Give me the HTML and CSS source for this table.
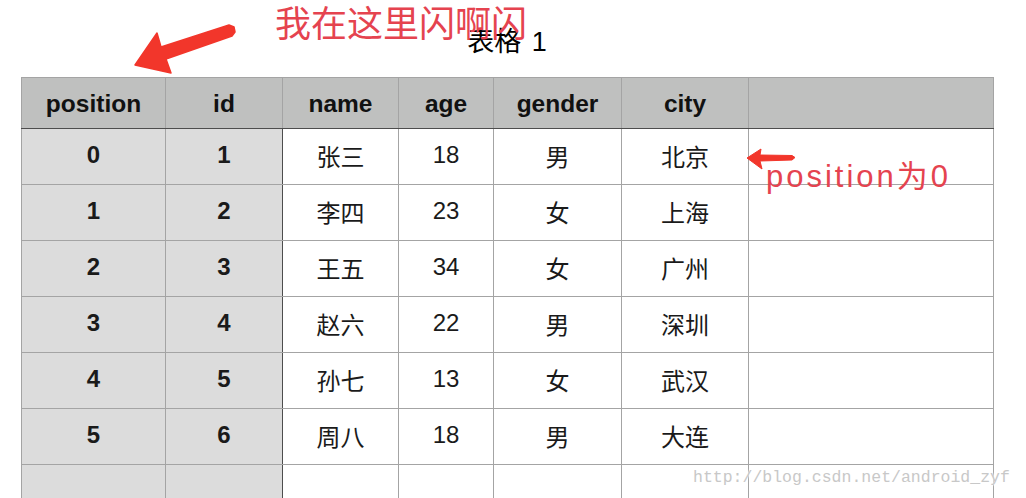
FILE: index.html
```html
<!DOCTYPE html>
<html lang="zh">
<head>
<meta charset="utf-8">
<title>表格 1</title>
<link rel="stylesheet" href="styles.css">
</head>
<body>
<div class="page">
  <div class="caption-area">
    <div class="caption">表格 1</div>
  </div>
  <table class="sheet">
    <colgroup>
      <col class="c-pos"><col class="c-id"><col class="c-name"><col class="c-age"><col class="c-gender"><col class="c-city"><col class="c-extra">
    </colgroup>
    <thead>
      <tr><th>position</th><th>id</th><th>name</th><th>age</th><th>gender</th><th>city</th><th></th></tr>
    </thead>
    <tbody>
      <tr><td class="key">0</td><td class="key key-last">1</td><td>张三</td><td>18</td><td>男</td><td>北京</td><td></td></tr>
      <tr><td class="key">1</td><td class="key key-last">2</td><td>李四</td><td>23</td><td>女</td><td>上海</td><td></td></tr>
      <tr><td class="key">2</td><td class="key key-last">3</td><td>王五</td><td>34</td><td>女</td><td>广州</td><td></td></tr>
      <tr><td class="key">3</td><td class="key key-last">4</td><td>赵六</td><td>22</td><td>男</td><td>深圳</td><td></td></tr>
      <tr><td class="key">4</td><td class="key key-last">5</td><td>孙七</td><td>13</td><td>女</td><td>武汉</td><td></td></tr>
      <tr><td class="key">5</td><td class="key key-last">6</td><td>周八</td><td>18</td><td>男</td><td>大连</td><td></td></tr>
      <tr><td class="key"></td><td class="key key-last"></td><td></td><td></td><td></td><td></td><td></td></tr>
    </tbody>
  </table>

  <div class="note note-top">我在这里闪啊闪</div>
  <svg class="arrow arrow-big" width="260" height="80" viewBox="0 0 260 80" aria-hidden="true">
    <polygon points="135,65 157,33 161,47 229,25 234,27 235,32 232,36 166,59 171,73" fill="#f2362b" stroke="#f2362b" stroke-width="1.5" stroke-linejoin="round"/>
  </svg>
  <div class="note note-side">position为0</div>
  <svg class="arrow arrow-small" width="1026" height="200" viewBox="0 0 1026 200" aria-hidden="true">
    <polygon points="747,158 761,149 760,155 792,155.5 795,157.5 792,160 760,161 762,169" fill="#f2362b" stroke="#f2362b" stroke-width="1" stroke-linejoin="round"/>
  </svg>
  <div class="watermark">http://blog.csdn.net/android_zyf</div>
</div>
</body>
</html>
```

FILE: styles.css
```css
html, body {
  margin: 0;
  padding: 0;
  background: #ffffff;
  overflow: hidden;
}

.page {
  position: relative;
  width: 1026px;
  height: 498px;
  overflow: hidden;
  padding-left: 21px;
  box-sizing: border-box;
  font-family: "Liberation Sans", "Noto Sans CJK SC", sans-serif;
  color: #111;
}

.caption-area {
  width: 972px;
  height: 77px;
  display: flex;
  justify-content: center;
  align-items: flex-start;
  box-sizing: border-box;
  padding-top: 26px;
}

.caption {
  font-size: 27px;
  line-height: 32px;
  color: #000;
  word-spacing: 3px;
}

.sheet {
  border-collapse: collapse;
  table-layout: fixed;
  width: 973px;
  font-size: 24px;
}

.c-pos { width: 144px; }
.c-id { width: 117px; }
.c-name { width: 116px; }
.c-age { width: 95px; }
.c-gender { width: 128px; }
.c-city { width: 127px; }
.c-extra { width: 245px; }

.sheet th,
.sheet td {
  border: 1px solid #a4a4a4;
  padding: 0;
  text-align: center;
  vertical-align: middle;
}

.sheet thead th {
  height: 49px;
  padding-top: 1px;
  background: #bfc0bf;
  font-weight: bold;
  font-size: 24.5px;
  color: #111;
  border-bottom: 1px solid #4d4d4d;
}

.sheet tbody td {
  height: 52px;
  padding-bottom: 3px;
  color: #1a1a1a;
}

.sheet tbody td.key {
  background: #dcdcdc;
  font-weight: bold;
}

.sheet tbody td.key-last {
  border-right: 1px solid #4d4d4d;
}

.note {
  position: absolute;
  color: #e5434f;
  font-family: "Liberation Sans", "Noto Sans CJK SC", sans-serif;
  white-space: nowrap;
}

.note-top {
  left: 275px;
  top: 3px;
  font-size: 36px;
  line-height: 44px;
}

.note-side {
  left: 766px;
  top: 157px;
  font-size: 31px;
  line-height: 40px;
  letter-spacing: 3px;
}

.arrow {
  position: absolute;
  left: 0;
  top: 0;
  pointer-events: none;
}

.watermark {
  position: absolute;
  left: 693px;
  top: 467px;
  font-family: "Liberation Mono", monospace;
  font-size: 16.5px;
  line-height: 22px;
  color: #c8c8c8;
  text-shadow: 0 0 2px #fff, 0 0 2px #fff;
  white-space: nowrap;
}
```
